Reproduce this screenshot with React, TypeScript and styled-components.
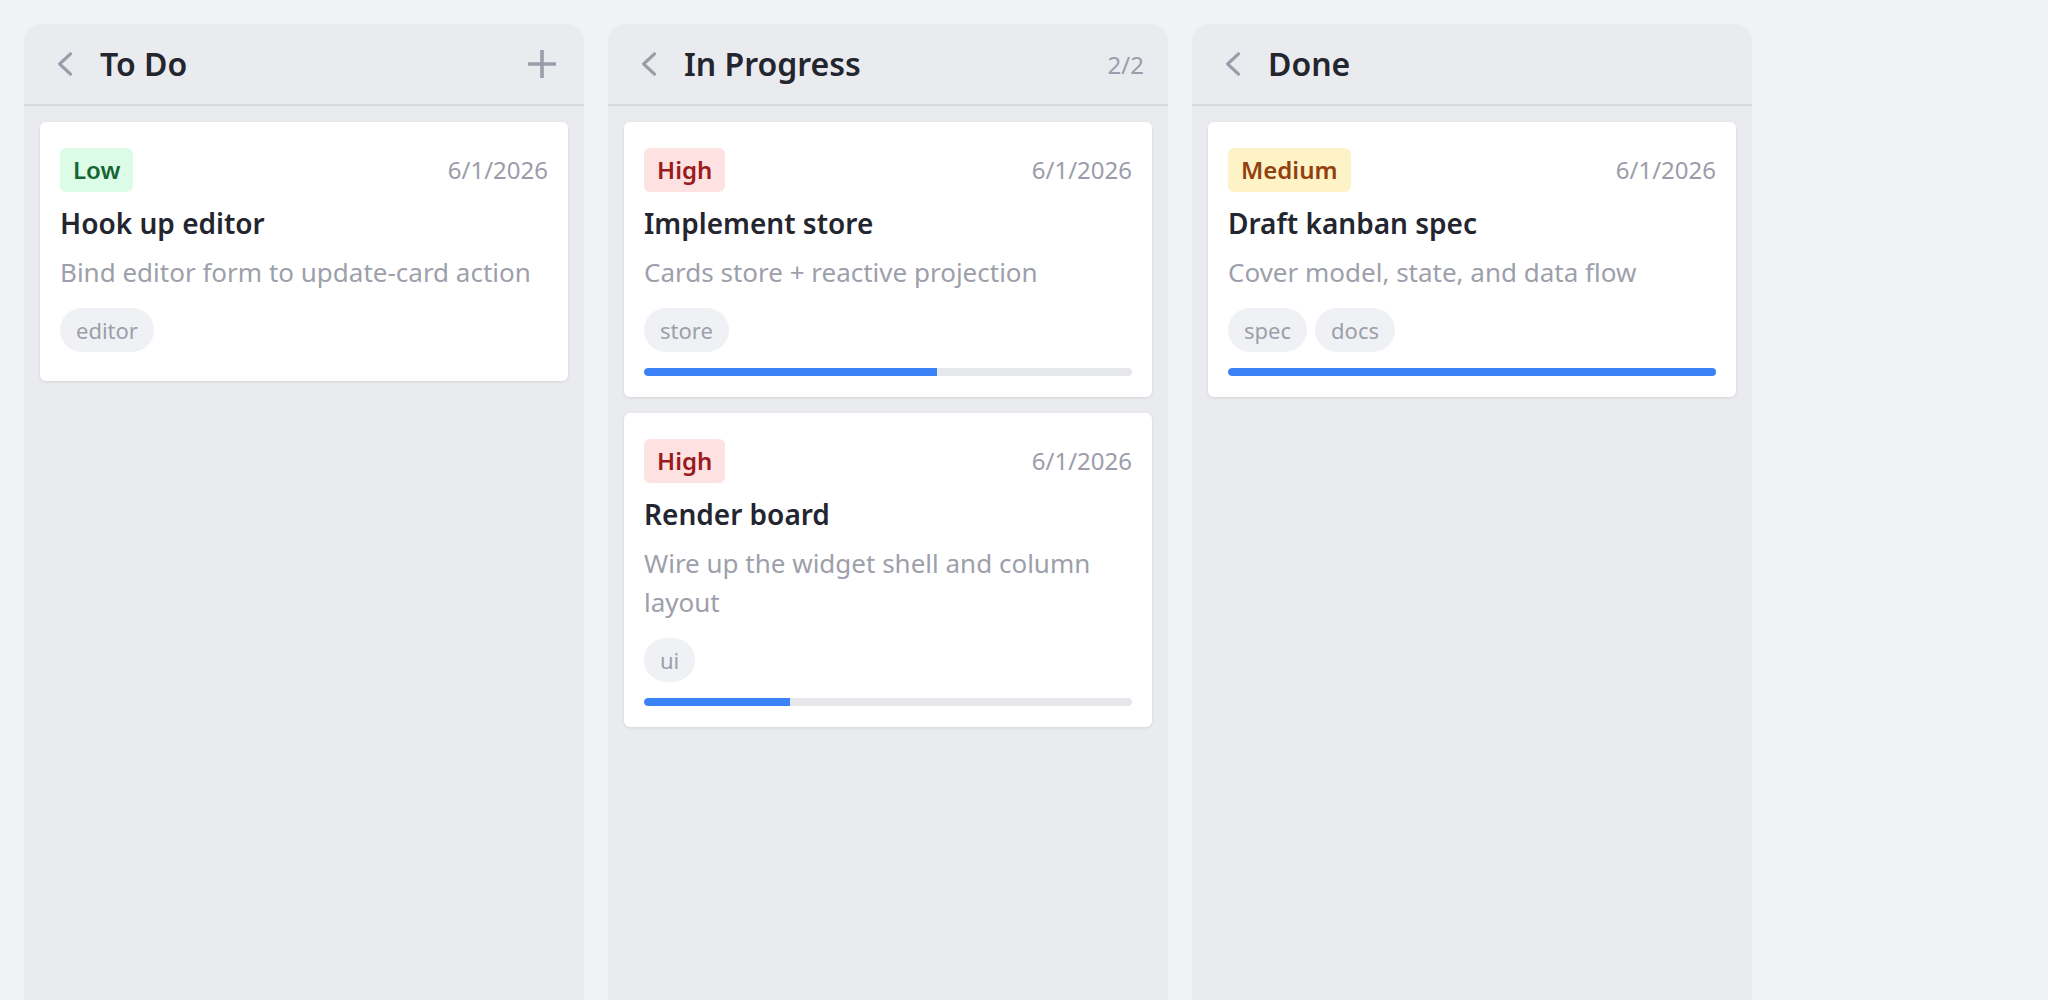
import React from 'react';
import styled, { createGlobalStyle } from 'styled-components';

type Priority = 'Low' | 'Medium' | 'High';

interface CardData {
  priority: Priority;
  date: string;
  title: string;
  description: string;
  tags: string[];
  progress?: number;
}

interface ColumnData {
  title: string;
  count?: string;
  canAdd?: boolean;
  cards: CardData[];
}

const columns: ColumnData[] = [
  {
    title: 'To Do',
    canAdd: true,
    cards: [
      {
        priority: 'Low',
        date: '6/1/2026',
        title: 'Hook up editor',
        description: 'Bind editor form to update-card action',
        tags: ['editor'],
      },
    ],
  },
  {
    title: 'In Progress',
    count: '2/2',
    cards: [
      {
        priority: 'High',
        date: '6/1/2026',
        title: 'Implement store',
        description: 'Cards store + reactive projection',
        tags: ['store'],
        progress: 60,
      },
      {
        priority: 'High',
        date: '6/1/2026',
        title: 'Render board',
        description: 'Wire up the widget shell and column layout',
        tags: ['ui'],
        progress: 30,
      },
    ],
  },
  {
    title: 'Done',
    cards: [
      {
        priority: 'Medium',
        date: '6/1/2026',
        title: 'Draft kanban spec',
        description: 'Cover model, state, and data flow',
        tags: ['spec', 'docs'],
        progress: 100,
      },
    ],
  },
];

const priorityColors: Record<Priority, { bg: string; fg: string }> = {
  Low: { bg: '#dcfce7', fg: '#166534' },
  Medium: { bg: '#fef3c7', fg: '#92400e' },
  High: { bg: '#fee2e2', fg: '#991b1b' },
};

const GlobalStyle = createGlobalStyle`
  html, body {
    margin: 0;
    padding: 0;
    background: #f0f2f5;
    overflow: hidden;
  }
  * {
    box-sizing: border-box;
  }
`;

const Board = styled.div`
  display: flex;
  align-items: flex-start;
  gap: 24px;
  padding: 24px 24px 0;
  font-family: 'Noto Sans', 'Open Sans', sans-serif;
`;

const Column = styled.section`
  width: 560px;
  min-height: 1000px;
  background: #eaebee;
  border-radius: 16px;
  display: flex;
  flex-direction: column;
`;

const ColumnHeader = styled.header`
  height: 82px;
  display: flex;
  align-items: center;
  padding: 0 24px;
  border-bottom: 2px solid #d8dadf;
`;

const IconButton = styled.button`
  width: 36px;
  height: 36px;
  padding: 0;
  border: 0;
  background: none;
  color: #9b9daa;
  display: flex;
  align-items: center;
  justify-content: center;
  flex-shrink: 0;
`;

const ColumnTitle = styled.h2`
  flex: 1;
  margin: 0 0 0 16px;
  font-size: 32px;
  font-weight: 600;
  line-height: 1;
  color: #23252f;
`;

const Count = styled.span`
  font-size: 24px;
  color: #9b9daa;
`;

const CardList = styled.div`
  display: flex;
  flex-direction: column;
  gap: 16px;
  padding: 16px;
`;

const Card = styled.article`
  display: flex;
  flex-direction: column;
  background: #ffffff;
  border-radius: 6px;
  padding: 26px 20px 21px;
  box-shadow: 0 1px 3px rgba(15, 23, 42, 0.1);
`;

const CardTop = styled.div`
  display: flex;
  align-items: center;
  justify-content: space-between;
`;

const Badge = styled.span<{ $priority: Priority }>`
  display: inline-block;
  padding: 4px 13px;
  border-radius: 6px;
  font-size: 24px;
  line-height: 36px;
  font-weight: 600;
  background: ${({ $priority }) => priorityColors[$priority].bg};
  color: ${({ $priority }) => priorityColors[$priority].fg};
`;

const DateText = styled.span`
  font-size: 24px;
  line-height: 32px;
  color: #9b9daa;
`;

const CardTitle = styled.h3`
  margin: 12px 0 0;
  font-size: 28px;
  line-height: 1.4;
  font-weight: 600;
  color: #23252f;
`;

const Description = styled.p`
  margin: 10px 0 0;
  font-size: 26px;
  line-height: 1.5;
  color: #9d9fab;
`;

const Tags = styled.div`
  display: flex;
  gap: 8px;
  margin: 16px 0 8px;
`;

const Tag = styled.span`
  padding: 6px 16px;
  border-radius: 22px;
  font-size: 22px;
  line-height: 32px;
  background: #f0f1f4;
  color: #9d9fab;
`;

const ProgressTrack = styled.div`
  margin-top: 8px;
  height: 8px;
  border-radius: 4px;
  background: #e5e7eb;
  overflow: hidden;
`;

const ProgressFill = styled.div`
  height: 100%;
  background: #3b82f6;
  border-radius: 4px 0 0 4px;
`;

const ChevronLeft = () => (
  <svg width="36" height="36" viewBox="0 0 36 36" fill="none">
    <polyline
      points="22.5,7.8 11.6,18 22.5,28.2"
      stroke="currentColor"
      strokeWidth="3.2"
      strokeLinecap="round"
      strokeLinejoin="round"
    />
  </svg>
);

const PlusIcon = () => (
  <svg width="36" height="36" viewBox="0 0 36 36" fill="none">
    <path d="M4 18h28M18 4v28" stroke="currentColor" strokeWidth="3.6" />
  </svg>
);

const TaskCard: React.FC<{ card: CardData }> = ({ card }) => (
  <Card>
    <CardTop>
      <Badge $priority={card.priority}>{card.priority}</Badge>
      <DateText>{card.date}</DateText>
    </CardTop>
    <CardTitle>{card.title}</CardTitle>
    <Description>{card.description}</Description>
    <Tags>
      {card.tags.map((t) => (
        <Tag key={t}>{t}</Tag>
      ))}
    </Tags>
    {card.progress !== undefined && (
      <ProgressTrack>
        <ProgressFill style={{ width: `${card.progress}%` }} />
      </ProgressTrack>
    )}
  </Card>
);

const App: React.FC = () => (
  <>
    <GlobalStyle />
    <Board>
      {columns.map((col) => (
        <Column key={col.title}>
          <ColumnHeader>
            <IconButton aria-label="Collapse">
              <ChevronLeft />
            </IconButton>
            <ColumnTitle>{col.title}</ColumnTitle>
            {col.count && <Count>{col.count}</Count>}
            {col.canAdd && (
              <IconButton aria-label="Add card">
                <PlusIcon />
              </IconButton>
            )}
          </ColumnHeader>
          <CardList>
            {col.cards.map((card) => (
              <TaskCard key={card.title} card={card} />
            ))}
          </CardList>
        </Column>
      ))}
    </Board>
  </>
);

export default App;
